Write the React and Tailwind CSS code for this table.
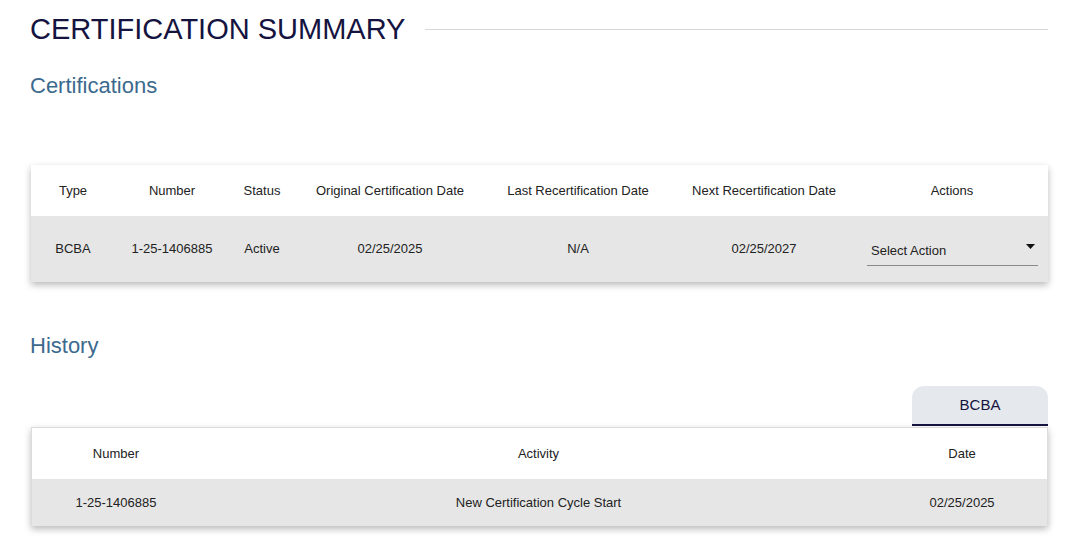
import React from 'react';

const certColumns = [
  { label: 'Type', width: 'w-[84px]' },
  { label: 'Number', width: 'w-[114px]' },
  { label: 'Status', width: 'w-[66px]' },
  { label: 'Original Certification Date', width: 'w-[190px]' },
  { label: 'Last Recertification Date', width: 'w-[186px]' },
  { label: 'Next Recertification Date', width: 'w-[186px]' },
  { label: 'Actions', width: 'w-[190px]' },
];

const certRow = ['BCBA', '1-25-1406885', 'Active', '02/25/2025', 'N/A', '02/25/2027'];

const historyColumns = [
  { label: 'Number', width: 'w-[168px]' },
  { label: 'Activity', width: 'w-[678px]' },
  { label: 'Date', width: 'w-[170px]' },
];

const historyRow = ['1-25-1406885', 'New Certification Cycle Start', '02/25/2025'];

const SelectAction = () => (
  <div className="mx-[10px] mr-[9px] flex h-[34px] items-center justify-between border-b border-[#8a8a8a] pl-[4px] pr-[3px] pt-[5px]">
    <span>Select Action</span>
    <svg width="9" height="5" viewBox="0 0 9 5" className="-mt-[9px]">
      <path d="M0 0 L9 0 L4.5 5 Z" fill="#111" />
    </svg>
  </div>
);

export default function App() {
  return (
    <div
      className="min-h-[548px] bg-white pl-[30px] pr-[32px] pt-[13px] text-[#222]"
      style={{ fontFamily: '"Liberation Sans", Arial, Helvetica, sans-serif' }}
    >
      {/* Title */}
      <div className="flex items-center">
        <h1 className="text-[29px] leading-[33px] text-[#15133f]">CERTIFICATION SUMMARY</h1>
        <div className="ml-[20px] h-px flex-1 bg-[#d8d8d8]" />
      </div>

      <h2 className="mt-[27px] text-[22px] leading-[26px] text-[#3c6a8e]">Certifications</h2>

      {/* Certifications table */}
      <div className="ml-px mt-[66px] bg-white text-[13px] shadow-[0_3px_7px_rgba(0,0,0,0.28)]">
        <div className="flex h-[51px] items-center">
          {certColumns.map((c) => (
            <div key={c.label} className={`${c.width} text-center`}>
              {c.label}
            </div>
          ))}
        </div>
        <div className="flex h-[66px] items-center bg-[#e6e6e6]">
          {certRow.map((v, i) => (
            <div key={i} className={`${certColumns[i].width} text-center`}>
              {v}
            </div>
          ))}
          <div className="w-[190px]">
            <SelectAction />
          </div>
        </div>
      </div>

      <h2 className="mt-[51px] text-[22px] leading-[26px] text-[#3c6a8e]">History</h2>

      {/* Tab */}
      <div className="mt-[27px] flex justify-end">
        <div className="flex h-[40px] w-[136px] items-center justify-center rounded-t-[12px] border-b-2 border-[#15133f] bg-[#e5e9ee] text-[15px] text-[#15133f]">
          BCBA
        </div>
      </div>

      {/* History table */}
      <div className="ml-px mt-px border border-b-0 border-[#dcdcdc] bg-white text-[13px] shadow-[0_3px_7px_rgba(0,0,0,0.28)]">
        <div className="flex h-[51px] items-center">
          {historyColumns.map((c) => (
            <div key={c.label} className={`${c.width} text-center`}>
              {c.label}
            </div>
          ))}
        </div>
        <div className="flex h-[47px] items-center bg-[#e6e6e6]">
          {historyRow.map((v, i) => (
            <div key={i} className={`${historyColumns[i].width} text-center`}>
              {v}
            </div>
          ))}
        </div>
      </div>
    </div>
  );
}
